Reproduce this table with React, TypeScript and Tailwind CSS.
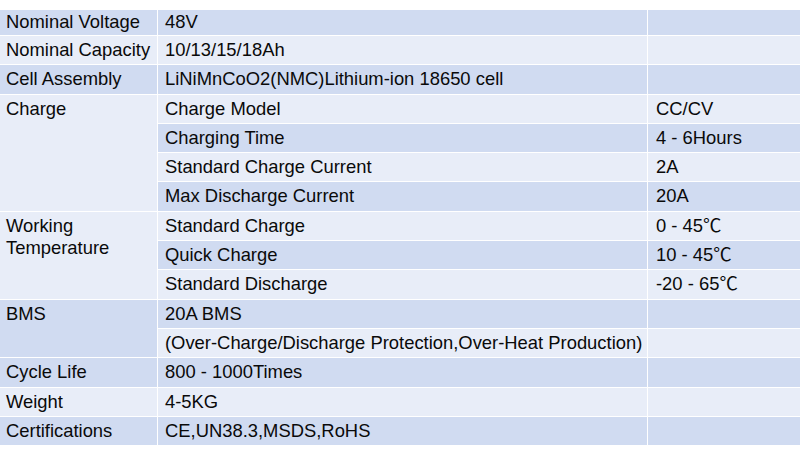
import React from 'react';

const DARK = 'bg-[#d0dbf1]';
const LIGHT = 'bg-[#e8edf8]';

interface Cell {
  text: string;
  col: 1 | 2 | 3;
  span?: number;
  dark: boolean;
  top?: boolean;
}

// rows 1..15, row 1 is a bit shorter (cropped at the top)
const rows: { label?: { text: string; span: number }; name: string; value: string }[] = [
  { label: { text: 'Nominal Voltage', span: 1 }, name: '48V', value: '' },
  { label: { text: 'Nominal Capacity', span: 1 }, name: '10/13/15/18Ah', value: '' },
  { label: { text: 'Cell Assembly', span: 1 }, name: 'LiNiMnCoO2(NMC)Lithium-ion 18650 cell', value: '' },
  { label: { text: 'Charge', span: 4 }, name: 'Charge Model', value: 'CC/CV' },
  { name: 'Charging Time', value: '4 - 6Hours' },
  { name: 'Standard Charge Current', value: '2A' },
  { name: 'Max Discharge Current', value: '20A' },
  { label: { text: 'Working\nTemperature', span: 3 }, name: 'Standard Charge', value: '0 - 45℃' },
  { name: 'Quick Charge', value: '10 - 45℃' },
  { name: 'Standard Discharge', value: '-20 - 65℃' },
  { label: { text: 'BMS', span: 2 }, name: '20A BMS', value: '' },
  { name: '(Over-Charge/Discharge Protection,Over-Heat Production)', value: '' },
  { label: { text: 'Cycle Life', span: 1 }, name: '800 - 1000Times', value: '' },
  { label: { text: 'Weight', span: 1 }, name: '4-5KG', value: '' },
  { label: { text: 'Certifications', span: 1 }, name: 'CE,UN38.3,MSDS,RoHS', value: '' },
];

const spanClass: Record<number, string> = {
  1: 'row-span-1',
  2: 'row-span-2',
  3: 'row-span-3',
  4: 'row-span-4',
};

const App: React.FC = () => {
  const cells: Cell[] = [];
  rows.forEach((r, i) => {
    const dark = i % 2 === 0;
    if (r.label) {
      cells.push({ text: r.label.text, col: 1, span: r.label.span, dark, top: r.label.span > 1 });
    }
    cells.push({ text: r.name, col: 2, dark });
    cells.push({ text: r.value, col: 3, dark });
  });

  return (
    <div
      className="w-[800px] h-[458px] bg-white pt-[10px] text-[#0a0a0a] text-[18.4px]"
      style={{ fontFamily: '"Liberation Sans", Arial, "Noto Sans CJK SC", sans-serif' }}
    >
      <div className="grid grid-cols-[157px_489px_1fr] grid-rows-[25px_repeat(14,28.3px)] grid-flow-dense gap-px">
        {cells.map((c, idx) => (
          <div
            key={idx}
            className={`${c.dark ? DARK : LIGHT} ${spanClass[c.span ?? 1]} ${
              c.col === 1 ? 'col-start-1 pl-[6px]' : c.col === 2 ? 'col-start-2 pl-[7px]' : 'col-start-3 pl-[8px]'
            } ${c.top ? 'pt-[3px] leading-[22px]' : 'flex items-center leading-none'} whitespace-nowrap`}
          >
            {c.top ? <div className="whitespace-pre-line">{c.text}</div> : c.text}
          </div>
        ))}
      </div>
    </div>
  );
};

export default App;
